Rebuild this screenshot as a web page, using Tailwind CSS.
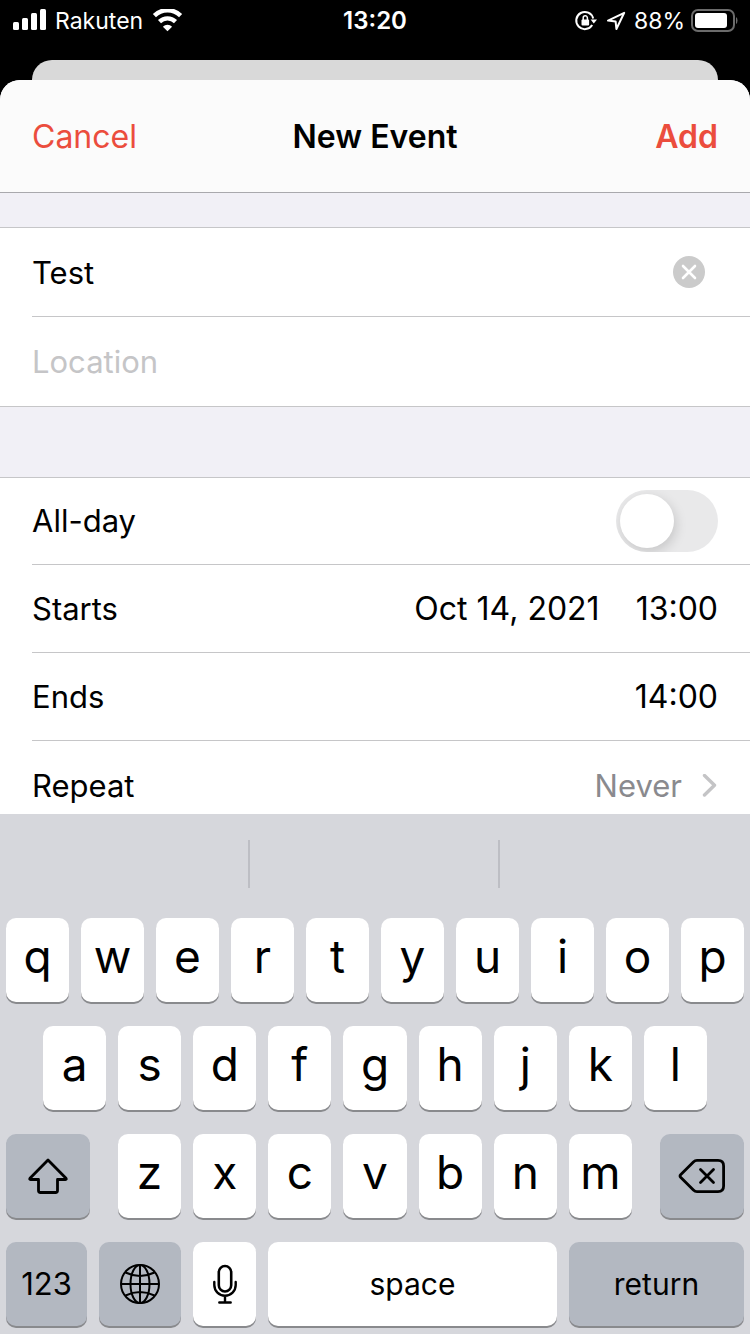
<!DOCTYPE html>
<html lang="en">

<head>
  <meta charset="UTF-8">
  <meta name="viewport" content="width=device-width, initial-scale=1.0">
  <title>New Event</title>
  <script src="https://cdn.jsdelivr.net/npm/@tailwindcss/browser@4"></script>
</head>

<body class="h-screen flex flex-col overflow-hidden bg-black text-black text-[31px] leading-10 font-['Inter','Liberation_Sans',sans-serif]">
  <!-- Status bar -->
  <div class="grid grid-cols-3 items-center h-[42px] mb-[18px] px-3 text-white text-2xl shrink-0">
    <div class="flex items-center gap-2">
      <svg class="w-[35px] h-6" viewBox="0 0 35 24" fill="#fff">
        <rect x="1" y="13" width="6" height="8" rx="1.5" />
        <rect x="10" y="9" width="6" height="12" rx="1.5" />
        <rect x="19" y="4" width="6" height="17" rx="1.5" />
        <rect x="28" y="0" width="6" height="21" rx="1.5" />
      </svg>
      <span class="text-[23px]">Rakuten</span>
      <svg class="w-8 h-6" viewBox="0 0 32 24" fill="none" stroke="#fff" stroke-width="4.4">
        <path d="M3.400 6.600a18.600 18.600 0 0 1 26.200 0" />
        <path d="M8.500 12.600a11.600 11.600 0 0 1 16 0" />
        <path d="M16.500 22.200l-4.600-4.500a6.600 6.600 0 0 1 9.200 0z" fill="#fff" stroke="none" />
      </svg>
    </div>
    <div class="text-center font-semibold">13:20</div>
    <div class="flex items-center justify-end whitespace-nowrap">
      <svg class="w-6 h-6 mr-2 shrink-0" viewBox="0 0 24 24" fill="none" stroke="#fff" stroke-width="2">
        <path d="M18.200 16A8.600 8.600 0 1 1 19.200 9.500" />
        <path d="M16.600 10.400h6.400l-3.200 4z" fill="#fff" stroke="none" />
        <rect x="7.500" y="10.500" width="7.600" height="6" rx="1" fill="#fff" stroke="none" />
        <path d="M9.200 11V8.900a2.100 2.100 0 0 1 4.200 0V11" stroke-width="1.500" />
      </svg>
      <svg class="w-5 h-6 mr-2 shrink-0" viewBox="0 0 20 24" fill="none" stroke="#fff" stroke-width="2" stroke-linejoin="round">
        <path d="M18.200 3.800L2 11.600l7.600.8.800 7.600z" />
      </svg>
      <span class="text-[23px]">88%</span>
      <svg class="w-[49px] h-6 ml-1 shrink-0" viewBox="0 0 49 24">
        <rect x="3" y="0" width="42" height="21" rx="6" fill="none" stroke="#6b6b6b" stroke-width="2" transform="translate(0 1)" />
        <rect x="6" y="4" width="32" height="15" rx="3" fill="#fff" />
        <path d="M47 8v7q1.500-.8 1.500-3.500t-1.500-3.500z" fill="#6b6b6b" />
      </svg>
    </div>
  </div>

  <!-- Card behind the sheet -->
  <div class="h-5 mx-8 rounded-t-[20px] bg-[#d9d9d9] shrink-0"></div>

  <!-- Sheet -->
  <main class="flex-1 min-h-0 overflow-hidden rounded-t-[20px] bg-[#f1f0f6]">
    <header class="grid grid-cols-3 items-center h-[113px] pt-[2px] px-8 bg-[#fbfbfb] border-b border-[#a9a9ad] text-[32px]">
      <button type="button" class="text-left text-[#eb4d3d]">Cancel</button>
      <h1 class="text-center font-semibold">New Event</h1>
      <button type="button" class="text-right font-semibold text-[#eb4d3d]">Add</button>
    </header>

    <form class="pt-[34px]">
      <div class="pl-8 bg-white border-y border-[#c6c6c8] mb-[70px]">
        <div class="flex items-center h-[89px] pr-[45px] border-b border-[#c6c6c8]">
          <input type="text" value="Test" aria-label="Title" class="flex-1 min-w-0 h-12 outline-none">
          <button type="button" aria-label="Clear text">
            <svg class="w-8 h-8" viewBox="0 0 32 32">
              <circle cx="16" cy="16" r="16" fill="#cbcbcb" />
              <path d="M10 10l12 12m0-12l-12 12" stroke="#fff" stroke-width="2.600" stroke-linecap="round" />
            </svg>
          </button>
        </div>
        <div class="flex items-center h-[89px] pr-8">
          <input type="text" placeholder="Location" aria-label="Location" class="flex-1 min-w-0 h-12 outline-none placeholder:text-[#c5c5c7]">
        </div>
      </div>

      <div class="pl-8 bg-white border-t border-[#c6c6c8]">
        <div class="flex items-center justify-between h-[87px] pr-8 border-b border-[#c6c6c8]">
          <label for="all-day">All-day</label>
          <input type="checkbox" id="all-day" role="switch"
            class="appearance-none flex items-center w-[102px] h-[62px] p-1 overflow-hidden rounded-full bg-[#e9e9ea] before:block before:size-[54px] before:rounded-full before:bg-white before:shadow-[2px_4px_12px_rgba(0,0,0,0.15)] checked:justify-end checked:bg-green-500">
        </div>
        <div class="flex items-center h-[88px] pr-8 border-b border-[#c6c6c8]">
          <span class="flex-1">Starts</span>
          <button type="button" class="text-[32px]">Oct 14, 2021</button>
          <button type="button" class="ml-9 text-[32px]">13:00</button>
        </div>
        <div class="flex items-center justify-between h-[88px] pr-8 border-b border-[#c6c6c8]">
          <span>Ends</span>
          <button type="button" class="text-[32px]">14:00</button>
        </div>
        <button type="button" class="flex items-center w-full h-[90px] pr-8">
          <span class="flex-1 text-left">Repeat</span>
          <span class="text-[#8a8a8e]">Never</span>
          <svg class="w-4 h-6 ml-5" viewBox="0 0 16 24" fill="none" stroke="#c4c4c6" stroke-width="3.400" stroke-linecap="round" stroke-linejoin="round">
            <path d="M2.500 1.500L12.500 11.200L2.500 21" />
          </svg>
        </button>
      </div>
    </form>
  </main>

  <!-- Keyboard -->
  <section aria-label="Keyboard" class="shrink-0 pb-2 bg-[#d6d7dc]">
    <div class="grid grid-cols-3 py-[26px] mb-1 h-[100px]">
      <div class="border-r-2 border-[#bdbec4]"></div>
      <div class="border-r-2 border-[#bdbec4]"></div>
      <div></div>
    </div>

    <div class="flex flex-col gap-6">
      <div data-keys="qwertyuiop" class="flex gap-3 px-[6px]"></div>
      <div data-keys="asdfghjkl" class="flex gap-3 px-[43px]"></div>

      <div class="grid grid-cols-[84fr_514fr_84fr] gap-7 px-[6px]">
        <button type="button" aria-label="Shift" class="flex items-center justify-center h-[84px] rounded-[10px] bg-[#b3b8c1] shadow-[0_2px_0_#898a8d]">
          <svg class="w-10 h-9" viewBox="0 0 40 36" fill="none" stroke="#000" stroke-width="2.800" stroke-linejoin="round">
            <path d="M20 2L2 20.300q-.8 1.200.5 1.200h8v11q0 2 2 2h15q2 0 2-2v-11h8q1.300 0 .5-1.200z" />
          </svg>
        </button>
        <div data-keys="zxcvbnm" class="flex gap-3"></div>
        <button type="button" aria-label="Delete" class="flex items-center justify-center h-[84px] rounded-[10px] bg-[#b3b8c1] shadow-[0_2px_0_#898a8d]">
          <svg class="w-12 h-9" viewBox="0 0 48 36" fill="none" stroke="#000" stroke-width="2.800" stroke-linecap="round" stroke-linejoin="round">
            <path d="M19 2.400h21q5.600 0 5.600 5.600v20q0 5.600-5.600 5.600H19q-2 0-3.600-1.600L2.600 19.200q-1.200-1.200 0-2.400L15.400 4Q17 2.400 19 2.400z" />
            <path d="M22.500 11.500l13 13m0-13l-13 13" />
          </svg>
        </button>
      </div>

      <div class="grid grid-cols-[81fr_82fr_63fr_289fr_175fr] gap-3 px-[6px]">
        <button type="button" class="h-[84px] rounded-[10px] bg-[#b3b8c1] shadow-[0_2px_0_#898a8d]">123</button>
        <button type="button" aria-label="Next keyboard" class="flex items-center justify-center h-[84px] rounded-[10px] bg-[#b3b8c1] shadow-[0_2px_0_#898a8d]">
          <svg class="w-10 h-10" viewBox="0 0 40 40" fill="none" stroke="#000" stroke-width="2">
            <circle cx="20" cy="20" r="19" />
            <ellipse cx="20" cy="20" rx="9.500" ry="19" />
            <path d="M20 1v38M1 20h38M5.500 8.500Q20 15.500 34.500 8.500M5.500 31.500Q20 24.500 34.500 31.500" />
          </svg>
        </button>
        <button type="button" aria-label="Dictate" class="flex items-center justify-center h-[84px] rounded-[10px] bg-white shadow-[0_2px_0_#898a8d]">
          <svg class="w-6 h-10" viewBox="0 0 24 40" fill="none" stroke="#000" stroke-width="2.600" stroke-linecap="round">
            <rect x="5.800" y="2" width="12.400" height="25.500" rx="6.200" />
            <path d="M1.300 18v3a10.700 10.700 0 0 0 21.400 0v-3M12 32v6M6.300 38.500h11.400" stroke-width="2.400" />
          </svg>
        </button>
        <button type="button" class="h-[84px] rounded-[10px] bg-white text-[30px] shadow-[0_2px_0_#898a8d]">space</button>
        <button type="button" class="h-[84px] rounded-[10px] bg-[#b3b8c1] text-[30px] shadow-[0_2px_0_#898a8d]">return</button>
      </div>
    </div>
  </section>

  <script>
    document.querySelectorAll('[data-keys]').forEach((row) => {
      row.innerHTML = [...row.dataset.keys].map((letter) => `
        <button type="button" class="flex-1 h-[84px] pb-2 rounded-[10px] bg-white text-[46px] shadow-[0_2px_0_#898a8d]">${letter}</button>
      `).join('');
    });
  </script>
</body>

</html>
